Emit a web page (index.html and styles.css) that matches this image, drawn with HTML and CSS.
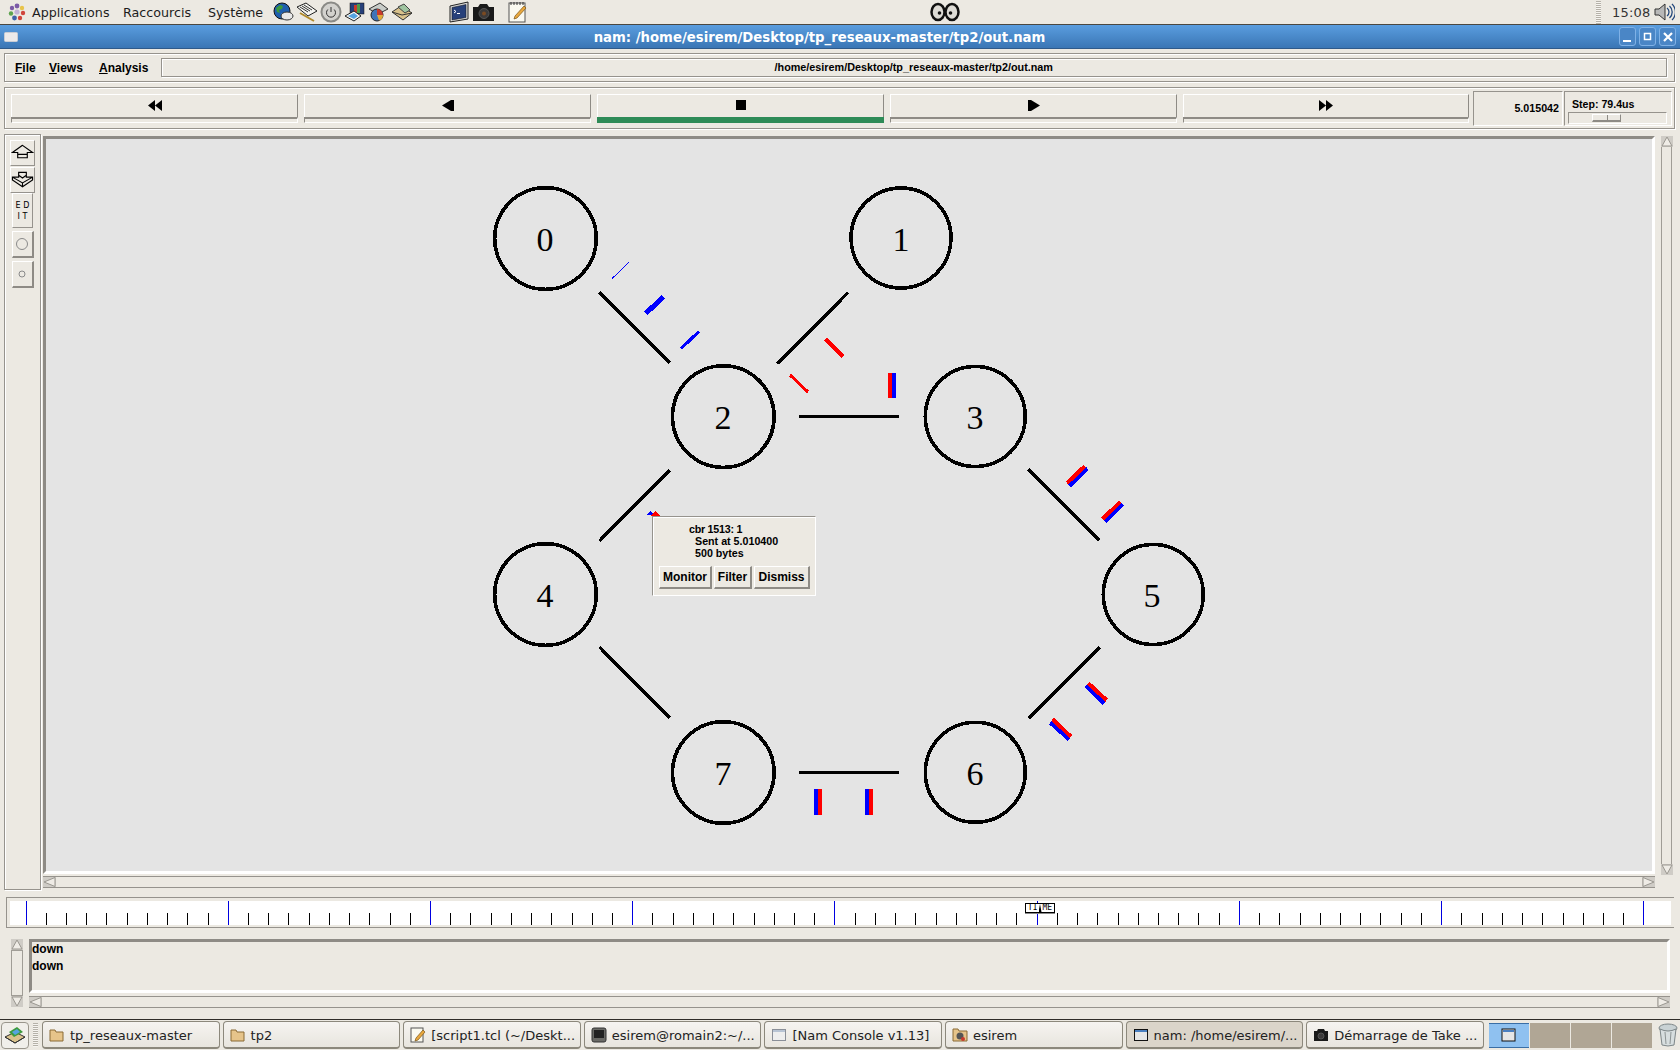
FILE: index.html
```html
<!DOCTYPE html>
<html lang="fr">
<head>
<meta charset="utf-8">
<title>nam</title>
<link rel="stylesheet" href="styles.css">
</head>
<body>
<header class="top-panel">
  <svg class="logo" width="18" height="18" viewBox="0 0 18 18"><circle class="c-purple" cx="9" cy="3" r="2.4"/><circle class="c-yellow" cx="14" cy="5" r="2.2"/><circle class="c-red" cx="15" cy="10" r="2.2"/><circle class="c-red" cx="12" cy="15" r="2.2"/><circle class="c-blue" cx="6.5" cy="15" r="2.4"/><circle class="c-green" cx="3" cy="10.5" r="2.2"/><circle class="c-purple" cx="4" cy="5" r="2.2"/><circle class="c-lilac" cx="9" cy="9" r="2.6"/></svg>
  <span class="top-item item-apps">Applications</span>
  <span class="top-item item-short">Raccourcis</span>
  <span class="top-item item-sys">Système</span>
  <div class="launchers">
    <svg width="21" height="20" viewBox="0 0 21 20"><circle class="i-globe" cx="9" cy="9" r="8"/><path class="i-green" d="M3 6l4-3 3 1-1 3-3 1 1 3-3-1z"/><ellipse class="i-mouse" cx="14" cy="14" rx="6" ry="4"/></svg>
    <svg width="22" height="20" viewBox="0 0 22 20"><path class="i-paper" d="M1 5l9-4 11 8-9 5z"/><path class="i-line" d="M4 5l8 5M6 4l8 5M8 3l8 5"/><path class="i-pen" d="M4 11l14 8"/></svg>
    <svg width="22" height="22" viewBox="0 0 22 22"><circle class="i-power" cx="11" cy="11" r="9.5"/><path class="i-line" d="M7.8 8.5a4.5 4.5 0 1 0 6.4 0M11 6v5"/></svg>
    <svg width="21" height="20" viewBox="0 0 21 20"><rect class="i-navy" x="6" y="1" width="14" height="11"/><rect class="i-red" x="10" y="3" width="3" height="8"/><rect class="i-green-r" x="13" y="2" width="3" height="9"/><path class="i-paper" d="M1 14l9-5 7 5-7 5z"/><path class="i-sky" d="M4 14l6-3 4 3-4 3z"/></svg>
    <svg width="22" height="20" viewBox="0 0 22 20"><path class="i-paper-g" d="M2 7l11-6 8 6-10 5z"/><circle class="i-blue-f" cx="10" cy="13" r="6"/><path class="i-red" d="M10 13V7a6 6 0 0 1 6 6z"/><path class="i-gold" d="M10 13h6a6 6 0 0 1-4 5.600z"/></svg>
    <svg width="22" height="20" viewBox="0 0 22 20"><path class="i-tan" d="M1 10l9-6 11 7-9 7z"/><path class="i-photo" d="M7 5l6-3 6 6-5 3z"/><path class="i-line" d="M1 10l10 3 10-2"/></svg>
  </div>
  <div class="launchers launchers-b">
    <svg width="21" height="22" viewBox="0 0 21 22"><path class="i-frame" d="M1 5L19 1v17L1 21z"/><path class="i-navy" d="M3 6.500L17 3.500v13L3 19z"/><path class="i-white-s" d="M5 9l2 1.500-2 1.500M8 12.500h3"/></svg>
    <svg width="23" height="20" viewBox="0 0 23 20"><path class="i-black" d="M1 5h5l2-3h7l2 3h5v14H1z"/><circle class="i-lens" cx="12" cy="11.500" r="5"/><circle class="i-lens-in" cx="12" cy="11.500" r="2"/></svg>
    <svg class="i-note" width="20" height="22" viewBox="0 0 20 22"><rect class="i-sheet" x="1" y="2" width="16" height="19"/><path class="i-line" d="M3 1v3M6 1v3M9 1v3M12 1v3M15 1v3"/><path class="i-pencil" d="M7 15L16 5l2 2-9 10-3 1z"/></svg>
  </div>
  <svg class="eyes" width="30" height="20" viewBox="0 0 30 20"><ellipse class="eye" cx="8" cy="10" rx="6.500" ry="8"/><ellipse class="eye" cx="22" cy="10" rx="6.500" ry="8"/><circle class="pupil" cx="9.500" cy="11" r="1.800"/><circle class="pupil" cx="20.500" cy="11" r="1.800"/></svg>
  <div class="handle"></div>
  <span class="clock">15:08</span>
  <svg class="speaker" width="21" height="20" viewBox="0 0 21 20"><path class="i-spk" d="M1 7h4l6-5v16l-6-5H1z"/><path class="i-wave" d="M13 6a5 5 0 0 1 0 8M15.500 4a8 8 0 0 1 0 12M18 2a11 11 0 0 1 0 16"/></svg>
</header>

<div class="titlebar">
  <svg class="win-icon" width="14" height="10" viewBox="0 0 14 10"><rect class="win-icon-r" x="0.500" y="0.500" width="13" height="9" rx="1"/></svg>
  <span class="title-text">nam: /home/esirem/Desktop/tp_reseaux-master/tp2/out.nam</span>
  <div class="win-buttons">
    <div class="win-btn"><svg width="12" height="12" viewBox="0 0 12 12"><rect class="w-f" x="1" y="9" width="8" height="2"/></svg></div>
    <div class="win-btn"><svg width="12" height="12" viewBox="0 0 12 12"><rect class="w-s" x="2.500" y="2.500" width="6" height="6"/></svg></div>
    <div class="win-btn"><svg width="12" height="12" viewBox="0 0 12 12"><path class="w-x" d="M2 2l8 8M10 2l-8 8"/></svg></div>
  </div>
</div>

<main class="window">
  <div class="frame menu-frame">
    <span class="menu"><u>F</u>ile</span>
    <span class="menu menu-v"><u>V</u>iews</span>
    <span class="menu menu-a"><u>A</u>nalysis</span>
    <div class="path-entry">/home/esirem/Desktop/tp_reseaux-master/tp2/out.nam</div>
  </div>

  <div class="frame tool-frame">
    <div class="play-btn"><div class="face"><svg width="14" height="11" viewBox="0 0 14 11"><path d="M7 0v11L0 5.500zM14 0v11L7 5.500z"/></svg></div><div class="strip"></div></div>
    <div class="play-btn"><div class="face"><svg width="12" height="11" viewBox="0 0 12 11"><path d="M12 0v11H9L0 5.500 9 0z"/></svg></div><div class="strip"></div></div>
    <div class="play-btn"><div class="face"><svg width="10" height="10" viewBox="0 0 10 10"><rect width="10" height="10"/></svg></div><div class="strip strip-on"></div></div>
    <div class="play-btn"><div class="face"><svg width="12" height="11" viewBox="0 0 12 11"><path d="M0 0v11h3l9-5.500L3 0z"/></svg></div><div class="strip"></div></div>
    <div class="play-btn"><div class="face"><svg width="14" height="11" viewBox="0 0 14 11"><path d="M0 0v11l7-5.500zM7 0v11l7-5.500z"/></svg></div><div class="strip"></div></div>
    <div class="time-box">5.015042</div>
    <div class="step-box">
      <span class="step-label">Step: 79.4us</span>
      <div class="step-trough"><div class="step-thumb"></div></div>
    </div>
  </div>

  <div class="main-row">
    <aside class="frame left-tools">
      <button class="tool tool-up"><svg width="24" height="20" viewBox="0 0 24 20"><path class="t-s" d="M12 2L1.500 9.500H7V15H17V9.500H22.500zM7 11.500H17M7 9.500H4"/></svg></button>
      <button class="tool tool-up tool-last"><svg width="24" height="20" viewBox="0 0 24 20"><path class="t-s" d="M8 2H16V7H22.500V10L12 17 1.500 10V7H8zM1.500 7L12 13 22.500 7M12 13V17M8 5L12 8 16 5"/></svg></button>
      <button class="tool tool-edit">E D<br>I T</button>
      <button class="tool tool-round"><svg width="14" height="14" viewBox="0 0 14 14"><circle class="t-c" cx="7" cy="7" r="5.500"/></svg></button>
      <button class="tool tool-round"><svg width="10" height="10" viewBox="0 0 10 10"><circle class="t-c" cx="5" cy="5" r="3"/></svg></button>
    </aside>

    <section class="canvas-area">
      <div class="canvas">
        <svg class="net" viewBox="46 139 1606 732" width="1606" height="732">
          <g class="links">
            <line x1="599.500" y1="292.500" x2="670" y2="363"/>
            <line x1="848" y1="292.500" x2="777.500" y2="363.500"/>
            <line x1="799" y1="416.500" x2="899" y2="416.500"/>
            <line x1="670" y1="470" x2="599.500" y2="541"/>
            <line x1="1028.500" y1="469.500" x2="1099.500" y2="540.500"/>
            <line x1="1099.500" y1="647.500" x2="1028.500" y2="718.500"/>
            <line x1="599.500" y1="647" x2="670" y2="718"/>
            <line x1="799" y1="772.500" x2="899" y2="772.500"/>
          </g>
          <g class="nodes">
            <circle cx="545.500" cy="238.500" r="50.800"/>
            <circle cx="901" cy="238" r="50"/>
            <circle cx="723.300" cy="416.600" r="50.800"/>
            <circle cx="975.300" cy="416.500" r="50"/>
            <circle cx="545.500" cy="594.500" r="50.800"/>
            <circle cx="1153.300" cy="594.500" r="50"/>
            <circle cx="975.300" cy="772.300" r="50"/>
            <circle cx="723.300" cy="772.500" r="50.800"/>
          </g>
          <g class="labels">
            <text x="545" y="251">0</text>
            <text x="901" y="251">1</text>
            <text x="723" y="429">2</text>
            <text x="975" y="429">3</text>
            <text x="545" y="607">4</text>
            <text x="1152" y="607">5</text>
            <text x="975" y="785">6</text>
            <text x="723" y="785">7</text>
          </g>
          <g class="packets-blue">
            <line class="w1" x1="612" y1="278.700" x2="628.700" y2="262.300"/>
            <line class="w5" x1="646" y1="313.300" x2="663.300" y2="296.700"/>
            <line class="w3" x1="681" y1="348.700" x2="699" y2="331.300"/>
            <line class="w4" x1="1069.500" y1="485.700" x2="1087.300" y2="468.300"/>
            <line class="w4" x1="1105" y1="521.300" x2="1122.700" y2="504.300"/>
            <line class="w4" x1="1085.700" y1="685.700" x2="1104" y2="703.300"/>
            <line class="w4" x1="1050.300" y1="722.700" x2="1069" y2="739.300"/>
            <rect x="892" y="373" width="4" height="25"/>
            <rect x="814" y="789" width="4" height="26"/>
            <rect x="865" y="789" width="4" height="26"/>
            <path d="M646 515l4-4 4 4z"/>
          </g>
          <g class="packets-red">
            <line class="w4" x1="825.300" y1="339" x2="843.300" y2="356.700"/>
            <line class="w3" x1="790" y1="375" x2="808" y2="392"/>
            <line class="w4" x1="1067" y1="483" x2="1084.700" y2="466.300"/>
            <line class="w4" x1="1102.700" y1="519" x2="1120.300" y2="501.700"/>
            <line class="w4" x1="1088.300" y1="683.300" x2="1106.700" y2="700.300"/>
            <line class="w4" x1="1052.700" y1="719.300" x2="1071" y2="736.700"/>
            <rect x="888" y="373" width="4" height="25"/>
            <rect x="818" y="789" width="4" height="26"/>
            <rect x="869" y="789" width="4" height="26"/>
            <path d="M650 516l5-5 6 5z"/>
          </g>
        </svg>
        <div class="popup">
          <div class="popup-text">
            <div class="popup-l1">cbr 1513: 1</div>
            <div class="popup-l2">Sent at 5.010400</div>
            <div class="popup-l2">500 bytes</div>
          </div>
          <div class="popup-btns">
            <div class="pbtn pbtn-m">Monitor</div>
            <div class="pbtn pbtn-f">Filter</div>
            <div class="pbtn pbtn-d">Dismiss</div>
          </div>
        </div>
      </div>
      <div class="vscroll">
        <svg class="arrow" width="12" height="11" viewBox="0 0 12 11"><path class="a-t" d="M6 1l5 9H1z"/></svg>
        <div class="v-track"></div>
        <svg class="arrow" width="12" height="11" viewBox="0 0 12 11"><path class="a-t" d="M6 10L1 1h10z"/></svg>
      </div>
      <div class="hscroll">
        <svg class="arrow" width="13" height="10" viewBox="0 0 13 10"><path class="a-t" d="M1 5l11-4.500v9z"/></svg>
        <div class="h-track"></div>
        <svg class="arrow" width="13" height="10" viewBox="0 0 13 10"><path class="a-t" d="M12 5L1 .5v9z"/></svg>
      </div>
    </section>
  </div>

  <div class="time-frame">
    <div class="time-inner">
      <svg class="ticks" viewBox="10 901 1659 24" width="1659" height="24">
        <path class="tick-black" d="M46.500 913V925M66.500 913V925M86.500 913V925M106.500 913V925M127.500 913V925M147.500 913V925M167.500 913V925M187.500 913V925M208.500 913V925M248.500 913V925M268.500 913V925M288.500 913V925M309.500 913V925M329.500 913V925M349.500 913V925M369.500 913V925M390.500 913V925M410.500 913V925M450.500 913V925M470.500 913V925M491.500 913V925M511.500 913V925M531.500 913V925M551.500 913V925M572.500 913V925M592.500 913V925M612.500 913V925M652.500 913V925M673.500 913V925M693.500 913V925M713.500 913V925M733.500 913V925M754.500 913V925M774.500 913V925M794.500 913V925M814.500 913V925M855.500 913V925M875.500 913V925M895.500 913V925M915.500 913V925M936.500 913V925M956.500 913V925M976.500 913V925M996.500 913V925M1016.500 913V925M1057.500 913V925M1077.500 913V925M1097.500 913V925M1118.500 913V925M1138.500 913V925M1158.500 913V925M1178.500 913V925M1198.500 913V925M1219.500 913V925M1259.500 913V925M1279.500 913V925M1300.500 913V925M1320.500 913V925M1340.500 913V925M1360.500 913V925M1380.500 913V925M1401.500 913V925M1421.500 913V925M1461.500 913V925M1482.500 913V925M1502.500 913V925M1522.500 913V925M1542.500 913V925M1563.500 913V925M1583.500 913V925M1603.500 913V925M1623.500 913V925"/>
        <path class="tick-blue" d="M26.500 901V925M228.500 901V925M430.500 901V925M632.500 901V925M834.500 901V925M1037.500 901V925M1239.500 901V925M1441.500 901V925M1643.500 901V925"/>
      </svg>
      <div class="time-flag"><span>TI</span><span class="flag-pin"></span><span>ME</span></div>
    </div>
  </div>

  <div class="console">
    <div class="console-v">
      <svg class="arrow" width="12" height="11" viewBox="0 0 12 11"><path class="a-t" d="M6 1l5 9H1z"/></svg>
      <div class="cv-track"></div>
      <svg class="arrow" width="12" height="11" viewBox="0 0 12 11"><path class="a-t" d="M6 10L1 1h10z"/></svg>
    </div>
    <div class="console-main">
      <div class="console-text"><div class="console-lines">down<br>down</div></div>
      <div class="hscroll hscroll-c">
        <svg class="arrow" width="13" height="10" viewBox="0 0 13 10"><path class="a-t" d="M1 5l11-4.500v9z"/></svg>
        <div class="h-track"></div>
        <svg class="arrow" width="13" height="10" viewBox="0 0 13 10"><path class="a-t" d="M12 5L1 .5v9z"/></svg>
      </div>
    </div>
  </div>
</main>

<footer class="bottom-panel">
  <div class="desk-btn"><svg width="22" height="20" viewBox="0 0 22 20"><path class="i-tan" d="M1 12l10-5 10 5-10 6z"/><path class="i-green" d="M5 7l8-5 6 5-9 5z"/><path class="i-sky" d="M8 7l5-3 3 3-5 3z"/><path class="i-line" d="M1 12l10 6 10-6"/></svg></div>
  <div class="handle handle-b"></div>
  <div class="task"><svg width="16" height="14" viewBox="0 0 16 14"><path class="i-folder" d="M1 2h5l1 2h7v9H1z"/></svg><span>tp_reseaux-master</span></div>
  <div class="task"><svg width="16" height="14" viewBox="0 0 16 14"><path class="i-folder" d="M1 2h5l1 2h7v9H1z"/></svg><span>tp2</span></div>
  <div class="task"><svg width="16" height="16" viewBox="0 0 16 16"><rect class="i-sheet" x="1" y="1" width="12" height="14"/><path class="i-pencil" d="M6 11l7-8 2 2-7 8-3 1z"/></svg><span>[script1.tcl (~/Deskt...</span></div>
  <div class="task"><svg width="16" height="16" viewBox="0 0 16 16"><rect class="i-term" x="1" y="1" width="14" height="14" rx="2"/><rect class="i-term-in" x="3" y="3" width="10" height="8"/></svg><span>esirem@romain2:~/...</span></div>
  <div class="task"><svg width="16" height="14" viewBox="0 0 16 14"><rect class="i-win-dim" x="1.500" y="1.500" width="13" height="11"/><rect class="i-win-dim-t" x="2" y="2" width="12" height="2"/></svg><span>[Nam Console v1.13]</span></div>
  <div class="task"><svg width="16" height="16" viewBox="0 0 16 16"><path class="i-folder" d="M1 2h5l1 2h8v10H1z"/><circle class="i-dark" cx="8" cy="9" r="3.500"/><circle class="i-red" cx="11" cy="12" r="2"/></svg><span>esirem</span></div>
  <div class="task task-on"><svg width="16" height="14" viewBox="0 0 16 14"><rect class="i-win" x="1.500" y="1.500" width="13" height="11"/><rect class="i-win-t" x="2" y="2" width="12" height="2"/></svg><span>nam: /home/esirem/...</span></div>
  <div class="task"><svg width="16" height="14" viewBox="0 0 16 14"><path class="i-black" d="M1 3h3l1-2h6l1 2h3v10H1z"/><circle class="i-lens" cx="8" cy="8" r="3"/></svg><span>Démarrage de Take ...</span></div>
  <div class="pager">
    <div class="ws ws-on"><svg width="15" height="14" viewBox="0 0 15 14"><rect class="i-win" x="1" y="1" width="13" height="12"/><rect class="i-win-t" x="2" y="2" width="11" height="2"/></svg></div>
    <div class="ws"></div>
    <div class="ws"></div>
    <div class="ws"></div>
  </div>
  <svg class="trash" width="20" height="24" viewBox="0 0 20 24"><ellipse class="i-trash-rim" cx="10" cy="5" rx="9" ry="4"/><path class="i-trash" d="M2 6l2 16q6 2 12 0l2-16q-8 4-16 0z"/><path class="i-line-g" d="M7 9l1 12M13 9l-1 12"/></svg>
</footer>
</body>
</html>
```

FILE: styles.css
```css
* { box-sizing: border-box; }
html, body { margin: 0; padding: 0; }
body {
  width: 1680px;
  height: 1050px;
  overflow: hidden;
  background: #ece9e2;
  display: flex;
  flex-direction: column;
  font-family: "DejaVu Sans", sans-serif;
  color: #1c1c1c;
}

/* top panel */
.top-panel {
  height: 25px;
  flex: none;
  display: flex;
  align-items: center;
  border-bottom: 1px solid #4a4740;
  position: relative;
  font-size: 12.700px;
}
.logo { margin-left: 8px; }
.top-item { white-space: nowrap; }
.item-apps { margin-left: 6px; width: 91px; }
.item-short { width: 85px; }
.item-sys { width: 65px; }
.launchers { display: flex; align-items: center; gap: 2px; }
.launchers-b { margin-left: 36px; }
.i-note { margin-left: 11px; }
.eyes { margin-left: 402px; }
.handle {
  width: 5px;
  height: 23px;
  margin-left: 636px;
  background: repeating-linear-gradient(#b5b1a8 0 1px, #f6f4f0 1px 2px);
}
.clock { margin-left: 11px; width: 42px; letter-spacing: .2px; color: #333; font-size: 13px; }
.speaker { flex: none; }

.c-purple { fill: #7b5aa6; }
.c-yellow { fill: #e8c44a; }
.c-red { fill: #d0453c; }
.c-blue { fill: #3f62a8; }
.c-green { fill: #5da34e; }
.c-lilac { fill: #c2b2d6; }
.i-globe { fill: #1f5fae; stroke: #111; }
.i-green { fill: #3c9a3c; }
.i-mouse { fill: #e8e8e8; stroke: #333; }
.i-paper { fill: #f4f4f0; stroke: #222; }
.i-paper-g { fill: #c8ccc8; stroke: #333; }
.i-line { fill: none; stroke: #333; stroke-width: 1; }
.i-line-g { fill: none; stroke: #8d9494; stroke-width: 1; }
.i-pen { fill: none; stroke: #b08a2a; stroke-width: 2; }
.i-power { fill: #d3d2ce; stroke: #8a8a86; stroke-width: 2; }
.i-navy { fill: #27407a; stroke: #111; stroke-width: .5; }
.i-red { fill: #c73a2c; }
.i-green-r { fill: #4a9a4a; }
.i-sky { fill: #55a3e0; }
.i-blue-f { fill: #3f74b8; stroke: #222; }
.i-gold { fill: #e2a93a; }
.i-tan { fill: #d9c28b; stroke: #333; }
.i-photo { fill: #9fc4a0; stroke: #444; }
.i-frame { fill: #d9d9d9; stroke: #222; }
.i-white-s { fill: none; stroke: #fff; stroke-width: 1; }
.i-black { fill: #1a1a1a; }
.i-lens { fill: #3c3a3a; stroke: #555; }
.i-lens-in { fill: #7a4a22; }
.i-sheet { fill: #faf9f0; stroke: #555; }
.i-pencil { fill: #e9a83e; stroke: #7a5416; stroke-width: .7; }
.i-spk { fill: #b8b8b8; stroke: #333; }
.i-wave { fill: none; stroke: #24487c; stroke-width: 1.300; }
.eye { fill: #dedcd6; stroke: #111; stroke-width: 2.500; }
.pupil { fill: #111; }

/* title bar */
.titlebar {
  height: 24px;
  flex: none;
  display: flex;
  align-items: center;
  position: relative;
  padding-left: 4px;
  background: linear-gradient(#5a9ddf, #3a76b5);
  border-bottom: 1px solid #2f5a8a;
}
.win-icon-r { fill: #eceaea; stroke: #c8ccd4; }
.title-text {
  position: absolute;
  left: 0;
  width: 1639px;
  margin-top: 2px;
  text-align: center;
  color: #fff;
  font-weight: 700;
  font-size: 13.250px;
}
.win-buttons { margin-left: auto; margin-right: 4px; display: flex; gap: 3px; }
.win-btn {
  width: 17px;
  height: 19px;
  display: flex;
  align-items: center;
  justify-content: center;
  border: 1px solid #7fb1e6;
  border-radius: 3px;
  background: #4a86c6;
}
.w-f { fill: #fff; }
.w-s { fill: none; stroke: #fff; stroke-width: 1.500; }
.w-x { stroke: #fff; stroke-width: 2.200; fill: none; }

/* window */
.window {
  flex: 1;
  min-height: 0;
  padding: 4px 5px 0 4px;
  display: flex;
  flex-direction: column;
  border-bottom: 1px solid #2f2d28;
  font-family: "Liberation Sans", Arial, sans-serif;
  font-weight: 700;
  color: #000;
}
.frame {
  border: 1px solid #96938d;
  box-shadow: inset 1px 1px 0 #fff, 1px 1px 0 #fff;
}
.menu-frame {
  height: 29px;
  flex: none;
  display: flex;
  align-items: center;
  padding: 0 7px 0 10px;
  font-size: 12px;
}
.menu { width: 34px; }
.menu-v { width: 50px; }
.menu-a { width: 61.500px; }
.path-entry {
  flex: 1;
  height: 19px;
  border: 1px solid #96938d;
  box-shadow: 1px 1px 0 #fff, inset 1px 1px 0 #fff;
  text-align: center;
  font-size: 10.800px;
  line-height: 17px;
}
.tool-frame {
  height: 42px;
  flex: none;
  margin-top: 5px;
  display: flex;
  align-items: flex-start;
  padding: 3px 2px 0 6px;
}
.play-btn {
  width: 287px;
  height: 29px;
  margin: 3px 6px 0 0;
  display: flex;
  flex-direction: column;
}
.play-btn:nth-child(5) { margin-right: 4px; width: 286px; }
.face {
  height: 23px;
  display: flex;
  align-items: center;
  justify-content: center;
  padding-bottom: 2px;
  border-top: 1px solid #fff;
  border-left: 1px solid #fff;
  border-right: 1px solid #8e8b85;
}
.strip {
  height: 6px;
  border-top: 2px solid #8e8b85;
  border-left: 1px solid #8e8b85;
  border-bottom: 1px solid #fff;
  border-right: 1px solid #fff;
}
.strip-on { border: none; background: #2e8b57; height: 6px; }
.time-box {
  width: 90px;
  height: 35px;
  border: 1px solid #96938d;
  border-bottom-color: #fff;
  border-right-color: #fff;
  text-align: right;
  padding: 10px 3px 0 0;
  font-size: 10.700px;
  line-height: 13px;
}
.step-box {
  width: 108px;
  height: 35px;
  margin-left: 1px;
  border: 1px solid #96938d;
  border-bottom-color: #fff;
  border-right-color: #fff;
  padding: 6px 4px 0 3px;
  font-size: 10.600px;
  line-height: 13px;
}
.step-label { display: block; margin-left: 4px; }
.step-trough {
  height: 12px;
  margin-top: 1px;
  border: 1px solid #96938d;
  border-right-color: #fff;
  border-bottom-color: #fff;
  padding: 1px 0 0 23px;
}
.step-thumb {
  width: 29px;
  height: 8px;
  border-top: 1px solid #fff;
  border-left: 1px solid #fff;
  border-right: 1px solid #8e8b85;
  border-bottom: 2px solid #8e8b85;
  background: linear-gradient(90deg, transparent 14px, #8e8b85 14px 15px, transparent 15px);
}

/* main row */
.main-row {
  height: 756px;
  flex: none;
  margin-top: 5px;
  display: flex;
  align-items: flex-start;
}
.left-tools {
  width: 37px;
  height: 756px;
  flex: none;
  display: flex;
  flex-direction: column;
  align-items: center;
  padding-top: 5px;
}
.tool {
  display: flex;
  align-items: center;
  justify-content: center;
  padding: 0;
  margin: 0 0 1px;
  background: #ece9e2;
  font: 400 8px/11px "DejaVu Sans", sans-serif;
  color: #000;
  text-align: center;
}
.tool-up {
  width: 25px;
  height: 26px;
  border: 1px solid #fff;
  border-right-color: #96938d;
  border-bottom-color: #96938d;
}
.tool-last { margin-bottom: 0; }
.tool-edit {
  width: 21px;
  height: 35px;
  border: 1px solid #fff;
  border-right-color: #96938d;
  border-bottom-color: #96938d;
  margin-bottom: 3px;
}
.tool-round {
  width: 22px;
  height: 27px;
  border-top: 1px solid #fff;
  border-left: 1px solid #fff;
  border-right: 2px solid #8e8b85;
  border-bottom: 2px solid #8e8b85;
  margin-bottom: 3px;
}
.t-s { fill: none; stroke: #000; stroke-width: 1.200; }
.t-c { fill: none; stroke: #8a8a8a; stroke-width: 1; }

.canvas-area {
  margin: 2px 0 0 2px;
  width: 1630px;
  display: grid;
  grid-template-columns: 1612px 11px;
  column-gap: 6px;
  row-gap: 2px;
  grid-template-rows: 738px 12px;
}
.canvas {
  position: relative;
  background: #e4e4e4;
  border-style: solid;
  border-width: 3px;
  border-color: #8e8b85 #fff #fff #8e8b85;
  overflow: hidden;
}
.net { display: block; }
.links line { stroke: #000; stroke-width: 3.500; shape-rendering: crispEdges; }
.nodes circle { fill: none; stroke: #000; stroke-width: 3.600; shape-rendering: crispEdges; }
.labels text {
  font: 400 34px "Liberation Serif", "Times New Roman", serif;
  text-anchor: middle;
  fill: #000;
}
.packets-blue { fill: #0000ff; stroke: none; }
.packets-red { fill: #ff0000; stroke: none; }
.packets-blue rect, .packets-red rect, .packets-blue path, .packets-red path { shape-rendering: crispEdges; }
.packets-blue line { stroke: #0000ff; shape-rendering: crispEdges; }
.packets-red line { stroke: #ff0000; shape-rendering: crispEdges; }
.w1 { stroke-width: 1; }
.w3 { stroke-width: 3; }
.w4 { stroke-width: 4; }
.w5 { stroke-width: 5; }

.popup {
  position: absolute;
  left: 606px;
  top: 377px;
  width: 164px;
  height: 80px;
  background: #ece9e2;
  border: 1px solid #96938d;
  border-right-color: #fff;
  border-bottom-color: #fff;
  box-shadow: inset 1px 1px 0 #fff;
  font-size: 10.700px;
  line-height: 12px;
}
.popup-text { padding: 6px 0 0 36px; height: 49px; }
.popup-l1 { letter-spacing: -.25px; }
.popup-l2 { margin-left: 6px; }
.popup-btns { display: flex; margin-left: 6px; gap: 2px; }
.pbtn {
  height: 23px;
  border-top: 1px solid #fff;
  border-left: 1px solid #fff;
  border-right: 2px solid #8e8b85;
  border-bottom: 2px solid #8e8b85;
  font-size: 12px;
  line-height: 20px;
  text-align: center;
}
.pbtn-m { width: 53px; }
.pbtn-f { width: 38px; }
.pbtn-d { width: 56px; }

.vscroll {
  height: 739px;
  display: flex;
  flex-direction: column;
}
.arrow { display: block; flex: none; background: #cfccc6; }
.a-t { fill: #efece6; stroke: #9a9790; stroke-width: 1; }
.v-track { flex: 1; border-left: 1px solid #a09d96; border-right: 1px solid #a09d96; }
.hscroll {
  height: 12px;
  display: flex;
  align-items: center;
  border-top: 1px solid #96938d;
  border-bottom: 1px solid #96938d;
}
.h-track { flex: 1; }

/* time slider */
.time-frame {
  height: 31px;
  flex: none;
  margin: 7px 1px 0 2px;
  padding: 3px 3px 2px 3px;
  border-top: 1px solid #96938d;
  border-left: 1px solid #96938d;
  border-bottom: 1px solid #96938d;
}
.time-inner {
  position: relative;
  height: 24px;
  background: #fff;
}
.ticks { display: block; }
.tick-black { stroke: #000; stroke-width: 1; fill: none; shape-rendering: crispEdges; }
.tick-blue { stroke: #0000e0; stroke-width: 1; fill: none; shape-rendering: crispEdges; }
.time-flag {
  position: absolute;
  left: 1015px;
  top: 2px;
  width: 30px;
  height: 10px;
  display: flex;
  align-items: center;
  justify-content: center;
  background: #fff;
  border: 1px solid #000;
  box-shadow: 0 1px 0 #888;
  font: 400 8px/8px "DejaVu Sans Mono", monospace;
  color: #000;
}
.flag-pin {
  width: 3px;
  height: 8px;
  margin: 0 1px;
  background: #000;
  clip-path: polygon(50% 0, 100% 100%, 0 100%);
  flex: none;
}

/* console */
.console {
  flex: none;
  margin-top: 11px;
  display: flex;
  align-items: flex-start;
  padding-left: 7px;
}
.console-v {
  width: 12px;
  height: 68px;
  display: flex;
  flex-direction: column;
}
.cv-track { flex: 1; border: 1px solid #a09d96; }
.console-main { width: 1641px; margin-left: 6px; }
.console-text {
  height: 54px;
  border-style: solid;
  border-width: 3px;
  border-color: #8e8b85 #fff #fff #8e8b85;
  font-size: 12px;
  line-height: 17px;
}
.console-lines { margin-top: -1px; }
.hscroll-c { margin-top: 3px; }

/* bottom panel */
.bottom-panel {
  height: 30px;
  flex: none;
  display: flex;
  align-items: center;
  padding-left: 1px;
  font-size: 13px;
  color: #222;
}
.desk-btn {
  width: 28px;
  height: 27px;
  border: 1px solid #9a968c;
  border-radius: 4px;
  display: flex;
  align-items: center;
  justify-content: center;
  background: #f1efea;
}
.handle-b { margin: 0 4px 0 4px; height: 24px; }
.task {
  width: 177.600px;
  height: 28px;
  flex: none;
  margin-right: 3px;
  display: flex;
  align-items: center;
  gap: 5px;
  padding: 1px 0 0 6px;
  white-space: nowrap;
  overflow: hidden;
  border: 1px solid #8c887c;
  border-bottom-width: 2px;
  border-radius: 4px;
  background: linear-gradient(#f6f4f1, #e8e5de);
}
.task svg { flex: none; }
.task-on { background: #dbd5ca; }
.i-folder { fill: #e6c48a; stroke: #8a6a34; }
.i-term { fill: #6a6a66; stroke: #333; }
.i-term-in { fill: #222; }
.i-win { fill: #e6e6e6; stroke: #111; }
.i-win-t { fill: #4a7fc0; }
.i-win-dim { fill: #eeeeee; stroke: #8a8f98; }
.i-win-dim-t { fill: #b8c4d4; }
.i-dark { fill: #555; }
.pager { display: flex; gap: 1px; margin-left: 2px; }
.ws { width: 40px; height: 25px; background: #b0a695; display: flex; align-items: center; justify-content: center; }
.ws-on { background: #8fc1f0; border-top: 1px solid #3a6ea5; border-bottom: 1px solid #3a6ea5; }
.trash { margin-left: 6px; }
.i-trash-rim { fill: #c9d2d4; stroke: #7d8688; }
.i-trash { fill: #d7dedf; stroke: #7d8688; }
```
